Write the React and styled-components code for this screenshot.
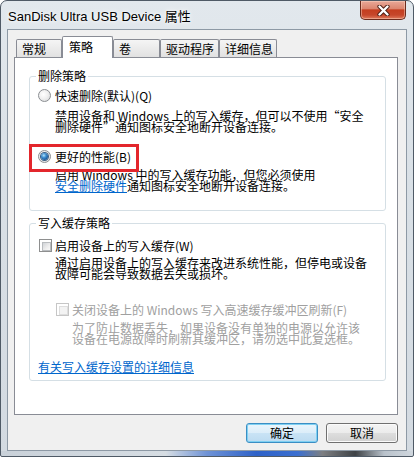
import styled, { createGlobalStyle } from 'styled-components';

const GlobalStyle = createGlobalStyle`
  html, body {
    margin: 0;
    padding: 0;
    background: #fff;
  }
  body {
    font-family: "Noto Sans CJK SC", "Liberation Sans", sans-serif;
    font-size: 12px;
    color: #000;
  }
  * {
    box-sizing: border-box;
  }
`;

const Window = styled.div`
  width: 414px;
  height: 457px;
  display: flex;
  flex-direction: column;
  padding: 0 6px 5px 6px;
  border: 1px solid #4f5a66;
  border-radius: 7px 7px 2px 2px;
  background:
    linear-gradient(to right, #c9d1d9 0%, #d6dde3 40%, #6f93d6 50%, #2e62c8 62%, #3b6fd0 72%, #7d7f82 78%, #3e4246 86%, #b9c2cb 93%, #d0d7de 100%) left bottom / 100% 5px no-repeat,
    linear-gradient(180deg, #e2e8ed 0%, #d9e0e6 40%, #d3dae1 100%);
`;

const TitleBar = styled.div`
  height: 28px;
  display: flex;
  align-items: center;
  padding-left: 1px;
`;

const Title = styled.span`
  font-family: "Liberation Sans", "Noto Sans CJK SC", sans-serif;
  font-size: 13px;
  color: #000;
  text-shadow: 0 0 6px #fff, 0 0 3px #fff;
`;

const CloseButton = styled.div`
  margin-left: auto;
  margin-right: 1px;
  align-self: flex-start;
  width: 46px;
  height: 19px;
  display: flex;
  align-items: center;
  justify-content: center;
  border: 1px solid #6b2b1d;
  border-top: none;
  border-radius: 0 0 5px 5px;
  background: linear-gradient(180deg, #e9a898 0%, #dc8670 42%, #c43e20 50%, #c6472b 78%, #df7a5d 100%);
  box-shadow: inset 0 0 0 1px rgba(255, 220, 200, 0.45);
`;

const Client = styled.div`
  flex: 1;
  display: flex;
  flex-direction: column;
  background: #f0f0f0;
  border: 1px solid #8d99a5;
  padding: 6px 8px 7px 6px;
`;

const TabRow = styled.div`
  position: relative;
  z-index: 1;
  height: 22px;
  margin-bottom: -1px;
  padding-left: 2px;
  display: flex;
  align-items: flex-end;
`;

const Tab = styled.div`
  width: ${p => p.$w}px;
  height: ${p => (p.$active ? 22 : 18)}px;
  margin-bottom: ${p => (p.$active ? 0 : 1)}px;
  padding: ${p => (p.$active ? '0 0 2px 6px' : '1px 0 0 5px')};
  display: flex;
  align-items: center;
  border: 1px solid #898c95;
  border-bottom: none;
  border-radius: 2px 2px 0 0;
  background: ${p => (p.$active ? '#fff' : 'linear-gradient(180deg, #f5f5f5 0%, #ebebeb 50%, #e1e1e1 100%)')};
  white-space: nowrap;
  line-height: 12px;
`;

const Panel = styled.div`
  flex: 1;
  background: #fff;
  border: 1px solid #898c95;
  padding: 12px 11px 0 14px;
`;

const Group = styled.fieldset`
  margin: ${p => p.$top || 0}px 0 0 0;
  min-width: 0;
  border: 1px solid #d5dfe5;
  border-radius: 3px;
  padding: ${p => p.$pt}px 8px ${p => p.$pb}px 8px;
`;

const Legend = styled.legend`
  padding: 0 2px;
  margin-left: -2px;
  line-height: 12px;
`;

const Option = styled.div`
  position: relative;
  height: 14px;
  margin: ${p => p.$mt || 0}px 0 0 ${p => p.$indent || 0}px;
  display: flex;
  align-items: center;
  gap: ${p => (p.$check ? 3 : 4)}px;
  white-space: nowrap;
  color: ${p => (p.$disabled ? '#a0a0a0' : '#000')};
`;

const Radio = styled.span`
  width: 13px;
  height: 13px;
  flex: none;
  border-radius: 50%;
  border: 1px solid #8b8e92;
  background: radial-gradient(circle at 40% 40%, #ffffff 0%, #f0f0f0 45%, #d2d4d6 100%);
  display: flex;
  align-items: center;
  justify-content: center;

  &::after {
    content: '';
    display: ${p => (p.$checked ? 'block' : 'none')};
    width: 7px;
    height: 7px;
    border-radius: 50%;
    background: radial-gradient(circle at 40% 35%, #b6e3fb 0%, #3f8fd0 35%, #1b5b9e 70%, #0d3a6e 100%);
    box-shadow: 0 0 0 1px #3a5e84;
  }
`;

const CheckBox = styled.span`
  width: 13px;
  height: 13px;
  flex: none;
  margin-left: 1px;
  border: 1px solid ${p => (p.$disabled ? '#c6c6c6' : '#8e8f8f')};
  background: #fff;
  padding: 2px;

  &::after {
    content: '';
    display: block;
    width: 100%;
    height: 100%;
    border: 1px solid ${p => (p.$disabled ? '#dedede' : '#b9bcbf')};
    background: ${p => (p.$disabled ? '#f3f3f3' : 'linear-gradient(135deg, #d0d3d7 0%, #eeeeee 60%, #f9f9f9 100%)')};
  }
`;

const Desc = styled.div`
  margin: ${p => p.$mt}px 0 0 ${p => p.$indent}px;
  line-height: 11px;
  white-space: nowrap;
  color: ${p => (p.$disabled ? '#a0a0a0' : '#000')};
`;

const Link = styled.a`
  color: #0066cc;
  text-decoration: underline;
  cursor: pointer;
`;

const LinkLine = styled.div`
  margin-top: 17px;
  line-height: 12px;
`;

const Highlight = styled.div`
  position: absolute;
  left: -9px;
  top: -5px;
  width: 110px;
  height: 28px;
  border: 3px solid #e3262c;
  pointer-events: none;
`;

const ButtonRow = styled.div`
  margin-top: 8px;
  display: flex;
  justify-content: flex-end;
  gap: 8px;
`;

const Button = styled.button`
  width: 72px;
  height: 20px;
  padding: 0;
  font-family: inherit;
  font-size: 12px;
  line-height: 12px;
  color: #000;
  border-radius: 3px;
  border: 1px solid ${p => (p.$default ? '#3b8ec4' : '#707070')};
  background: ${p =>
    p.$default
      ? 'linear-gradient(180deg, #eaf5fc 0%, #dcedf9 50%, #c9e3f5 51%, #bcdbf1 100%)'
      : 'linear-gradient(180deg, #f4f4f4 0%, #ebebeb 50%, #dddddd 51%, #d1d1d1 100%)'};
  box-shadow: inset 0 0 0 1px ${p => (p.$default ? '#7fd0f2' : '#fbfbfb')};
`;

const tabs = [
  { label: '常规', w: 46 },
  { label: '策略', w: 51, active: true },
  { label: '卷', w: 47 },
  { label: '驱动程序', w: 59 },
  { label: '详细信息', w: 58 },
];

export default function App() {
  return (
    <>
      <GlobalStyle />
      <Window>
        <TitleBar>
          <Title>SanDisk Ultra USB Device 属性</Title>
          <CloseButton>
            <svg width="13" height="11" viewBox="0 0 13 11">
              <path d="M2.5 1.5 L10.5 9.5 M10.5 1.5 L2.5 9.5" stroke="#4a1c12" strokeWidth="4.2" strokeLinecap="round" />
              <path d="M2.5 1.5 L10.5 9.5 M10.5 1.5 L2.5 9.5" stroke="#fff" strokeWidth="2.4" strokeLinecap="round" />
            </svg>
          </CloseButton>
        </TitleBar>
        <Client>
          <TabRow>
            {tabs.map(t => (
              <Tab key={t.label} $w={t.w} $active={t.active}>
                {t.label}
              </Tab>
            ))}
          </TabRow>
          <Panel>
            <Group $pt={6} $pb={19}>
              <Legend>删除策略</Legend>
              <Option>
                <Radio />
                快速删除(默认)(Q)
              </Option>
              <Desc $mt={8} $indent={17}>
                禁用设备和 Windows 上的写入缓存，但可以不使用“安全
                <br />
                删除硬件”通知图标安全地断开设备连接。
              </Desc>
              <Option $mt={17}>
                <Radio $checked />
                更好的性能(B)
                <Highlight />
              </Option>
              <Desc $mt={6} $indent={17}>
                启用 Windows 中的写入缓存功能，但您必须使用
                <br />
                <Link>安全删除硬件</Link>通知图标安全地断开设备连接。
              </Desc>
            </Group>
            <Group $top={6} $pt={9} $pb={7}>
              <Legend>写入缓存策略</Legend>
              <Option $check>
                <CheckBox />
                启用设备上的写入缓存(W)
              </Option>
              <Desc $mt={5} $indent={17}>
                通过启用设备上的写入缓存来改进系统性能，但停电或设备
                <br />
                故障可能会导致数据丢失或损坏。
              </Desc>
              <Option $check $mt={23} $indent={17} $disabled>
                <CheckBox $disabled />
                关闭设备上的 Windows 写入高速缓存缓冲区刷新(F)
              </Option>
              <Desc $mt={6} $indent={34} $disabled>
                为了防止数据丢失，如果设备没有单独的电源以允许该
                <br />
                设备在电源故障时刷新其缓冲区，请勿选中此复选框。
              </Desc>
              <LinkLine>
                <Link>有关写入缓存设置的详细信息</Link>
              </LinkLine>
            </Group>
          </Panel>
          <ButtonRow>
            <Button $default>确定</Button>
            <Button>取消</Button>
          </ButtonRow>
        </Client>
      </Window>
    </>
  );
}
